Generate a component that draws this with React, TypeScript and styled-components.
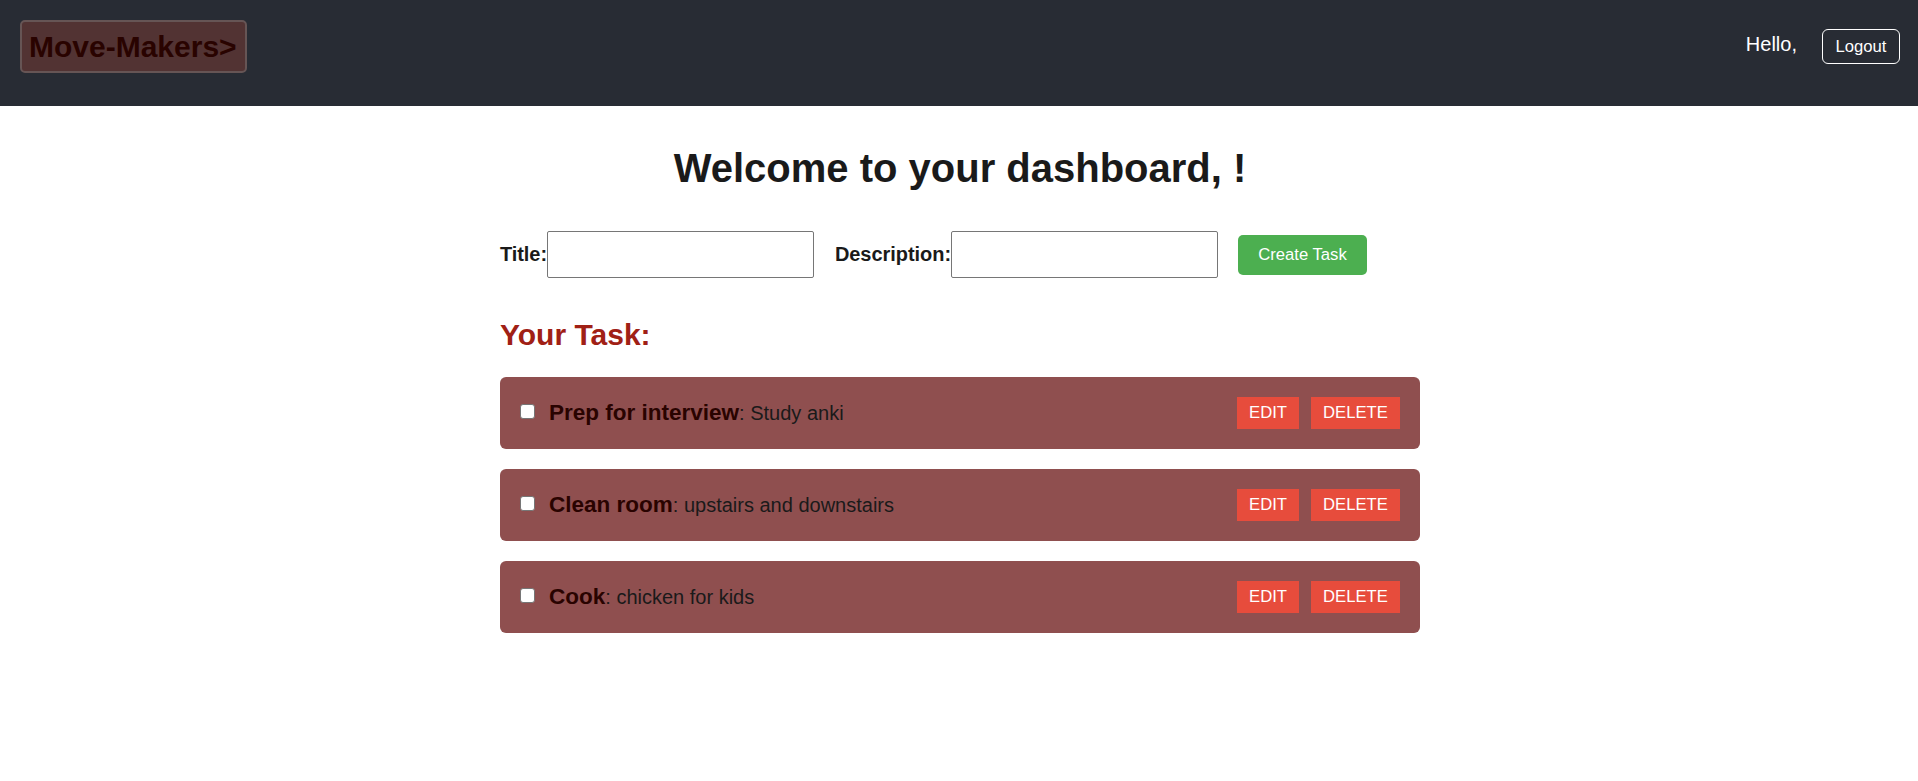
import React from "react";
import styled, { createGlobalStyle } from "styled-components";

const GlobalStyle = createGlobalStyle`
  * { box-sizing: border-box; }
  body {
    margin: 0;
    background: #fff;
    color: #1a1a1a;
    font-family: "Liberation Sans", Arial, sans-serif;
    font-size: 20px;
  }
  button, input { font-family: inherit; margin: 0; }
`;

const Header = styled.header`
  display: flex;
  justify-content: space-between;
  align-items: flex-start;
  height: 106px;
  padding: 20px 18px 0 20px;
  background: #282c34;
`;

const Brand = styled.div`
  width: 227px;
  height: 53px;
  padding: 0 7px;
  border: 2px solid #665555;
  border-radius: 5px;
  background: #523333;
  color: #290300;
  font-size: 30px;
  font-weight: bold;
  line-height: 49px;
  white-space: nowrap;
`;

const UserArea = styled.div`
  display: flex;
  gap: 25px;
  padding-top: 9px;
  color: #fff;
`;

const Greeting = styled.span`
  line-height: 30px;
`;

const LogoutButton = styled.button`
  width: 78px;
  height: 35px;
  padding: 0;
  border: 1px solid #fff;
  border-radius: 6px;
  background: transparent;
  color: #fff;
  font-size: 16.667px;
`;

const Main = styled.main`
  width: 922px;
  margin: 0 auto;
  padding-left: 2px;
`;

const Welcome = styled.h1`
  margin: 39px 0 0;
  font-size: 40px;
  line-height: 46px;
  text-align: center;
`;

const TaskForm = styled.form`
  display: flex;
  align-items: center;
  gap: 20px;
  margin-top: 40px;
`;

const Field = styled.label<{ $width: number }>`
  display: flex;
  align-items: center;
  justify-content: flex-end;
  width: ${({ $width }) => $width}px;
  font-weight: bold;
  letter-spacing: -0.05px;
`;

const TextInput = styled.input`
  flex: none;
  width: 267px;
  height: 47px;
  border: 1px solid #767676;
  border-radius: 2px;
  background: #fff;
`;

const CreateButton = styled.button`
  width: 129px;
  height: 40px;
  padding: 0;
  border: 0;
  border-radius: 5px;
  background: #4caf50;
  color: #fff;
  font-size: 16.667px;
`;

const SectionTitle = styled.h2`
  margin: 39px 0 0;
  color: #a02015;
  font-size: 30px;
  line-height: 35px;
`;

const TaskList = styled.ul`
  display: flex;
  flex-direction: column;
  gap: 20px;
  margin: 25px 0 0;
  padding: 0;
  list-style: none;
`;

const TaskItem = styled.li`
  display: flex;
  align-items: center;
  height: 72px;
  padding: 0 20px;
  border-radius: 6px;
  background: #8f4f4f;
`;

const Checkbox = styled.input`
  appearance: none;
  width: 15px;
  height: 15px;
  margin: 0 14px 3px 0;
  border: 1px solid #767676;
  border-radius: 3px;
  background: #fff;
`;

const TaskText = styled.span`
  flex: 1;
  line-height: 26px;
`;

const TaskTitle = styled.strong`
  color: #290300;
  font-size: 22.5px;
`;

const Actions = styled.div`
  display: flex;
  gap: 12px;
`;

const ActionButton = styled.button<{ $width: number }>`
  width: ${({ $width }) => $width}px;
  height: 32px;
  padding: 0 0 1px;
  border: 0;
  background: #e74c3c;
  color: #fff;
  font-size: 16.667px;
`;

const tasks = [
  { title: "Prep for interview", description: "Study anki" },
  { title: "Clean room", description: "upstairs and downstairs" },
  { title: "Cook", description: "chicken for kids" },
];

export default function App() {
  return (
    <>
      <GlobalStyle />
      <Header>
        <Brand>Move-Makers&gt;</Brand>
        <UserArea>
          <Greeting>Hello,</Greeting>
          <LogoutButton>Logout</LogoutButton>
        </UserArea>
      </Header>
      <Main>
        <Welcome>Welcome to your dashboard, !</Welcome>
        <TaskForm onSubmit={(e) => e.preventDefault()}>
          <Field $width={314}>
            Title:
            <TextInput />
          </Field>
          <Field $width={384}>
            Description:
            <TextInput />
          </Field>
          <CreateButton>Create Task</CreateButton>
        </TaskForm>
        <SectionTitle>Your Task:</SectionTitle>
        <TaskList>
          {tasks.map((task) => (
            <TaskItem key={task.title}>
              <Checkbox type="checkbox" />
              <TaskText>
                <TaskTitle>{task.title}</TaskTitle>: {task.description}
              </TaskText>
              <Actions>
                <ActionButton $width={62}>EDIT</ActionButton>
                <ActionButton $width={89}>DELETE</ActionButton>
              </Actions>
            </TaskItem>
          ))}
        </TaskList>
      </Main>
    </>
  );
}
